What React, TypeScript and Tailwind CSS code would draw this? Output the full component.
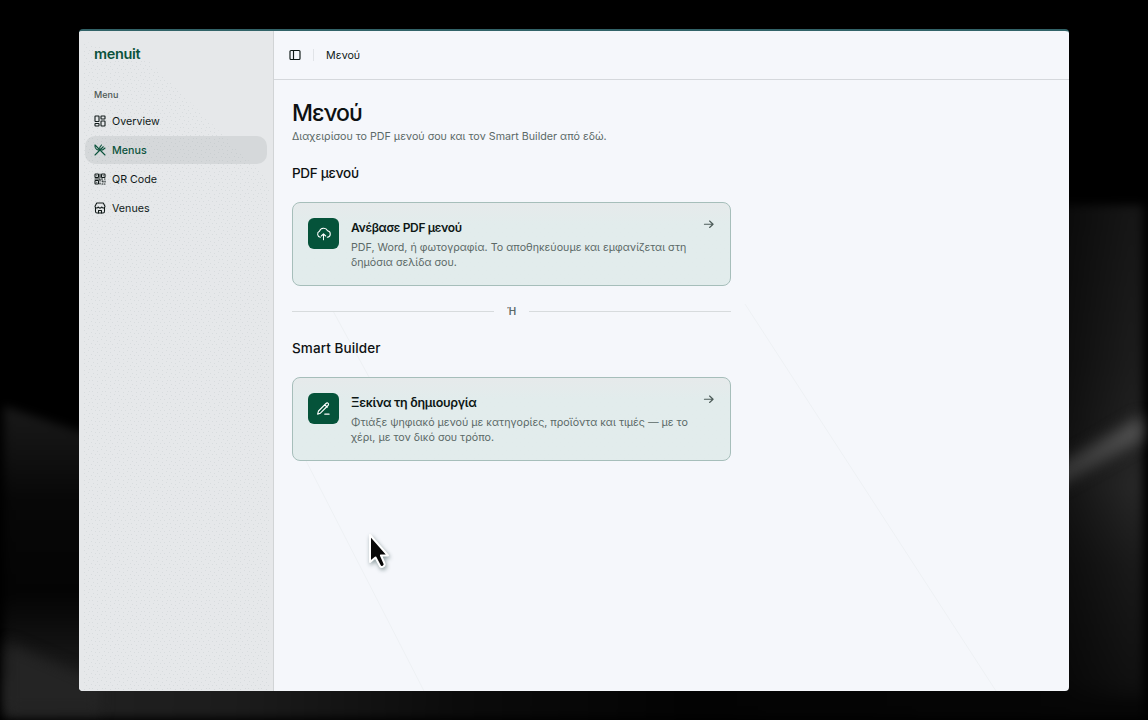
import type { ReactNode } from "react";

type IconProps = { className?: string; children: ReactNode; width?: number };

function Icon({ className = "size-3", children, width = 2.2 }: IconProps) {
  return (
    <svg viewBox="0 0 24 24" fill="none" stroke="currentColor" strokeWidth={width} strokeLinecap="round" strokeLinejoin="round" className={`shrink-0 ${className}`}>
      {children}
    </svg>
  );
}

const overview = (
  <>
    <rect x="2" y="2" width="8" height="11" rx="1" />
    <rect x="14" y="2" width="8" height="6" rx="1" />
    <rect x="2" y="17" width="8" height="5" rx="1" />
    <rect x="14" y="12" width="8" height="10" rx="1" />
  </>
);
const menus = (
  <>
    <path d="m2 22 13-13M2 2l20 20M2 2c-.5 4 1.5 9 6 10l3-1" />
    <path d="m15 2-3 4c-1.500 2 0 6 3 6 1.500 0 3-.5 4-1.500L22 8M18.500 5.500 15 9" />
  </>
);
const qr = (
  <>
    <rect x="2" y="2" width="7" height="7" rx="1" />
    <rect x="15" y="2" width="7" height="7" rx="1" />
    <rect x="2" y="15" width="7" height="7" rx="1" />
    <path d="M5.500 5.500h.01M18.500 5.500h.01M5.500 18.500h.01M12 2v7M12 12H2M12 12v4M12 20v2M15 12h2M21 12h1M16 16h2v2M22 16v2M16 22h2M22 22h-1" />
  </>
);
const venues = (
  <>
    <path d="M3 11v8c0 2 1 3 3 3h12c2 0 3-1 3-3v-8" />
    <path d="M5.500 2h13L22 8.500c0 4.500-5 4.500-6.500 1.500-1.500 3-5.500 3-7 0C7 13 2 13 2 8.500z" />
    <path d="M9 22v-5h6v5" />
  </>
);

const items = [
  { label: "Overview", icon: overview },
  { label: "Menus", icon: menus, active: true },
  { label: "QR Code", icon: qr },
  { label: "Venues", icon: venues },
];

function Backdrop() {
  return (
    <svg className="absolute inset-0 size-full" viewBox="0 0 1148 720">
      <defs>
        <filter id="soft" x="-20%" y="-20%" width="140%" height="140%" colorInterpolationFilters="sRGB">
          <feGaussianBlur stdDeviation="5" />
        </filter>
        <filter id="softer" x="-50%" y="-50%" width="200%" height="200%" colorInterpolationFilters="sRGB">
          <feGaussianBlur stdDeviation="7" />
        </filter>
        <linearGradient id="left" x1="0" y1="405" x2="0" y2="720" gradientUnits="userSpaceOnUse">
          <stop offset="0" stopColor="#191919" />
          <stop offset=".15" stopColor="#111" />
          <stop offset=".3" stopColor="#070707" />
          <stop offset=".6" stopColor="#040404" />
          <stop offset=".8" stopColor="#151515" />
          <stop offset="1" stopColor="#222" />
        </linearGradient>
        <linearGradient id="right" x1="0" y1="200" x2="0" y2="720" gradientUnits="userSpaceOnUse">
          <stop offset="0" stopColor="#151515" />
          <stop offset=".3" stopColor="#1b1b1b" />
          <stop offset=".42" stopColor="#1f1f1f" />
          <stop offset=".55" stopColor="#262626" />
          <stop offset=".7" stopColor="#191919" />
          <stop offset=".92" stopColor="#101010" />
          <stop offset="1" stopColor="#050505" />
        </linearGradient>
        <linearGradient id="shade" x1="1065" y1="0" x2="1130" y2="0" gradientUnits="userSpaceOnUse">
          <stop offset="0" stopColor="#000" stopOpacity=".5" />
          <stop offset="1" stopColor="#000" stopOpacity="0" />
        </linearGradient>
        <linearGradient id="beam" x1="1069" y1="0" x2="1145" y2="0" gradientUnits="userSpaceOnUse">
          <stop offset="0" stopColor="#363636" />
          <stop offset="1" stopColor="#545454" />
        </linearGradient>
        <linearGradient id="floor" x1="0" y1="0" x2="1148" y2="0" gradientUnits="userSpaceOnUse">
          <stop offset="0" stopColor="#222" />
          <stop offset=".2" stopColor="#1c1c1c" />
          <stop offset=".4" stopColor="#0b0b0b" />
          <stop offset=".6" stopColor="#030303" />
          <stop offset="1" stopColor="#060606" />
        </linearGradient>
      </defs>
      <rect width="1148" height="720" fill="#000" />
      <g filter="url(#soft)">
        <path d="M4 406 100 438 V718H4Z" fill="url(#left)" />
        <path d="M4 680H1144V718H4Z" fill="url(#floor)" />
        <path d="M1050 205H1143V700H1050Z" fill="url(#right)" />
        <path d="M1050 205H1143V700H1050Z" fill="url(#shade)" />
      </g>
      <g filter="url(#softer)">
        <path d="M6 642 100 682V712H6Z" fill="#242424" />
        <path d="M1050 470 1142 415 1142 440 1050 492Z" fill="url(#beam)" />
      </g>
    </svg>
  );
}

function Sidebar() {
  return (
    <aside className="flex w-[195px] shrink-0 flex-col border-r border-[#d1d4d6] bg-[#e6e8ea] px-1.5 pt-[12px]">
      <div className="h-[22px] pl-[9px] text-[14.500px] leading-[22px] font-semibold tracking-[-0.35px] text-[#0b533c]">menuit</div>
      <div className="mt-[23px] h-[14px] pl-[9px] text-[9px] leading-[14px] font-medium text-[#4d5754]">Menu</div>
      <nav className="mt-[5px] flex flex-col gap-px">
        {items.map((item) => (
          <a key={item.label} className={`flex h-7 items-center gap-1.5 rounded-[10px] pl-[9px] text-[10.700px] ${item.active ? "bg-[#d5d8da] font-medium text-[#0b533c]" : "text-[#101918]"}`}>
            <Icon className="-mt-px size-3">{item.icon}</Icon>
            <span className="pt-[2px]">{item.label}</span>
          </a>
        ))}
      </nav>
    </aside>
  );
}

type CardProps = { title: string; titleClass: string; lines: string[]; icon: ReactNode };

function ActionCard({ title, titleClass, lines, icon }: CardProps) {
  return (
    <div className="flex h-[84px] w-[439px] rounded-lg border border-[#a6beba] bg-linear-to-b from-[#e6eaeb] to-[#e2ecec] to-25% px-[15px] pt-[15px]">
      <div className="flex size-[31px] shrink-0 items-center justify-center rounded-[6px] bg-[#05533a] text-white">
        <Icon className="size-[15px]" width={1.7}>{icon}</Icon>
      </div>
      <div className="ml-3 flex-1 whitespace-nowrap">
        <h3 className={`h-[20px] leading-[19px] font-semibold text-[#0d1715] ${titleClass}`}>{title}</h3>
        <p className="mt-[2px] text-[10.700px] leading-[15px] text-[#5b6967]">
          {lines[0]}
          <br />
          {lines[1]}
        </p>
      </div>
      <Icon className="size-[13px] text-[#4d5c59]" width={2.1}>
        <path d="M4.500 11.500h16M14 5.500l6.500 6-6.500 6" />
      </Icon>
    </div>
  );
}

export default function App() {
  return (
    <div className="relative h-[720px] w-[1148px] overflow-hidden bg-black pt-[29px] pl-[79px] font-['Inter','Noto_Sans',sans-serif]">
      <Backdrop />
      <div className="relative flex h-[662px] w-[990px] overflow-hidden rounded-[4px] border-t-2 border-[#326368] bg-[#f5f7fb]">
        <svg className="absolute inset-0 size-full" viewBox="0 0 990 660" fill="none" stroke="#eef1f4">
          <path d="M666 273 917 660M222 420 345 660M254 280 290 346" />
        </svg>
        <svg className="absolute top-0 left-0 z-10 h-[660px] w-[194px]">
          <defs>
            <pattern id="grain" width="13" height="11" patternUnits="userSpaceOnUse">
              <path d="M1 1h1M5 2h1M9 0h1M12 4h1M3 5h1M7 5h1M0 8h1M5 9h1M10 8h1" transform="translate(0 .5)" stroke="#7d8c8a" strokeOpacity=".13" />
            </pattern>
          </defs>
          <path d="M4 10 70 30 190 150V660H4Z" fill="url(#grain)" />
        </svg>
        <Sidebar />
        <div className="relative flex flex-1 flex-col">
          <header className="flex h-[49px] items-center border-b border-[#d5d8dc] pl-[15px]">
            <Icon className="size-3 text-[#0d1715]" width={2.3}>
              <rect x="2" y="3" width="20" height="18" rx="2" />
              <path d="M9 3v18" />
            </Icon>
            <div className="ml-3 h-3 w-px bg-[#e1e4e8]" />
            <span className="ml-3 pt-[2px] text-[10.700px] text-[#0d1715]">Μενού</span>
          </header>
          <main className="flex w-[457px] flex-col pl-[18px] whitespace-nowrap">
            <h1 className="mt-[18px] h-[30px] text-[23px] leading-[30px] font-medium tracking-[-0.9px] text-[#0d1112]">Μενού</h1>
            <p className="mt-px h-[15px] text-[10.700px] leading-4 text-[#5b6967]">Διαχειρίσου το PDF μενού σου και τον Smart Builder από εδώ.</p>
            <h2 className="mt-[19px] h-5 text-[13.500px] leading-5 font-medium tracking-[-0.3px] text-[#0d1112]">PDF μενού</h2>
            <div className="mt-[19px]">
              <ActionCard
                title="Ανέβασε PDF μενού"
                titleClass="text-[12px] tracking-[-0.36px]"
                lines={["PDF, Word, ή φωτογραφία. Το αποθηκεύουμε και εμφανίζεται στη", "δημόσια σελίδα σου."]}
                icon={<path d="M7 18A5 5 0 0 1 5.500 8.500 7 7 0 0 1 18.500 7.500 5.300 5.300 0 0 1 18 18M12 22v-9M8.500 16l3.500-3.500 3.500 3.500" />}
              />
            </div>
            <div className="mt-[17px] flex h-4 items-center">
              <div className="h-px flex-1 bg-[#d7dbdd]" />
              <span className="w-[35px] text-center text-[10px] font-semibold text-[#5b6967]">Ή</span>
              <div className="h-px flex-1 bg-[#d7dbdd]" />
            </div>
            <h2 className="mt-[19px] h-5 text-[13.500px] leading-5 font-medium tracking-[0.1px] text-[#0d1112]">Smart Builder</h2>
            <div className="mt-[19px]">
              <ActionCard
                title="Ξεκίνα τη δημιουργία"
                titleClass="text-[12.500px] tracking-[-0.3px]"
                lines={["Φτιάξε ψηφιακό μενού με κατηγορίες, προϊόντα και τιμές — με το", "χέρι, με τον δικό σου τρόπο."]}
                icon={<path d="M4 16 16 4c1.300-1.300 2.500-1.300 3.500-.3s1 2.200-.3 3.500L7 19.500 2.500 21zM14 6l4 4M14 21h7" />}
              />
            </div>
          </main>
        </div>
      </div>
      <svg className="absolute top-[528px] left-[362px] h-[46px] w-[36px] drop-shadow-[1px_2px_2px_rgba(20,50,50,0.45)]" viewBox="0 0 36 46">
        <path d="M8 7v27l5.500-4.500 4.500 8.500c1.200 2.200 5.500 .2 4.500-2.500l-3.500-8h7z" fill="#090909" stroke="#fff" strokeWidth="2" strokeLinejoin="round" />
      </svg>
    </div>
  );
}
